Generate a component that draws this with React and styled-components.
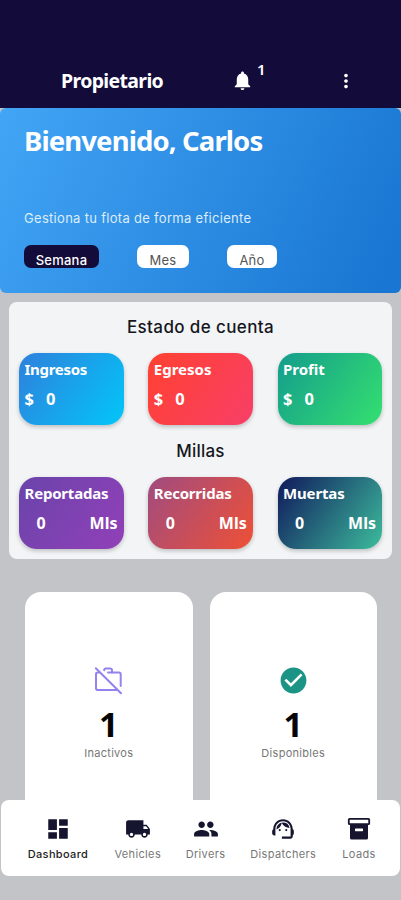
import React from 'react';
import styled, { createGlobalStyle } from 'styled-components';
import {
    MdNotifications,
    MdMoreVert,
    MdCheckCircle,
    MdDashboard,
    MdLocalShipping,
    MdPeople,
    MdSupportAgent,
} from 'react-icons/md';

const money = [
    { title: 'Ingresos', from: '#2f80dc', to: '#02c6f8', track: -0.3 },
    { title: 'Egresos', from: '#ff4130', to: '#f83f68', track: 0 },
    { title: 'Profit', from: '#149c8c', to: '#34e070', track: 0 },
];

const miles = [
    { title: 'Reportadas', from: '#6a44aa', to: '#9240b8', track: -0.2 },
    { title: 'Recorridas', from: '#a04c80', to: '#ee5036', track: -0.2 },
    { title: 'Muertas', from: '#10195c', to: '#3cbc9c', track: -0.15 },
];

const WorkOffIcon = () => (
    <svg viewBox="0 0 31 31" fill="none" stroke="currentColor" strokeWidth="2" strokeLinecap="round">
        <path d="M2.8 3.2 28 28.3" />
        <path d="M6 7.6H4.8A1.8 1.8 0 0 0 3 9.4v13.8A1.8 1.8 0 0 0 4.8 25H24" />
        <path d="M15 7.6h11a1.7 1.7 0 0 1 1.7 1.7V21" />
        <path d="M11.2 5.2V5a1.5 1.5 0 0 1 1.5-1.5h4.6A1.7 1.7 0 0 1 19 5.2v2.2" />
    </svg>
);

const LoadsIcon = () => (
    <svg width="26" height="26" viewBox="0 0 26 26">
        <path d="M4 8h18v14a1.5 1.5 0 0 1-1.5 1.5h-15A1.5 1.5 0 0 1 4 22z" fill="#15152f" />
        <rect x="2.8" y="2.8" width="20.4" height="5.4" rx="0.8" fill="#fff" stroke="#15152f" strokeWidth="1.8" />
        <rect x="9" y="12.6" width="8" height="2.6" rx="0.4" fill="#fff" />
    </svg>
);

function App() {
    return (
        <Screen>
            <GlobalStyle />
            <Header>
                <HeaderTitle>Propietario</HeaderTitle>
                <Bell>
                    <MdNotifications size={23} />
                    <BellCount>1</BellCount>
                </Bell>
                <MdMoreVert size={22} />
            </Header>

            <Main>
                <Hero>
                    <Welcome>Bienvenido, Carlos</Welcome>
                    <Subtitle>Gestiona tu flota de forma eficiente</Subtitle>
                    <Periods>
                        <Period $active $width={75}>Semana</Period>
                        <Period $width={52}>Mes</Period>
                        <Period $width={50}>Año</Period>
                    </Periods>
                </Hero>

                <Account>
                    <SectionTitle $track={0.38}>Estado de cuenta</SectionTitle>
                    <Tiles>
                        {money.map((item) => (
                            <Tile key={item.title} $from={item.from} $to={item.to}>
                                <TileTitle $track={item.track}>{item.title}</TileTitle>
                                <Amount>
                                    <span>$</span>
                                    <span>0</span>
                                </Amount>
                            </Tile>
                        ))}
                    </Tiles>
                    <SectionTitle $track={0.2}>Millas</SectionTitle>
                    <Tiles>
                        {miles.map((item) => (
                            <Tile key={item.title} $from={item.from} $to={item.to}>
                                <TileTitle $track={item.track}>{item.title}</TileTitle>
                                <Distance>
                                    <span>0</span>
                                    <span>Mls</span>
                                </Distance>
                            </Tile>
                        ))}
                    </Tiles>
                </Account>

                <Stats>
                    <StatCard $color="#9383ee">
                        <WorkOffIcon />
                        <StatValue>1</StatValue>
                        <StatLabel>Inactivos</StatLabel>
                    </StatCard>
                    <StatCard $color="#1b9485">
                        <MdCheckCircle />
                        <StatValue>1</StatValue>
                        <StatLabel>Disponibles</StatLabel>
                    </StatCard>
                </Stats>
            </Main>

            <BottomNav>
                <NavItem $active $width={66}>
                    <MdDashboard size={26} />
                    <span>Dashboard</span>
                </NavItem>
                <NavItem $width={50}>
                    <MdLocalShipping size={26} />
                    <span>Vehicles</span>
                </NavItem>
                <NavItem $width={42}>
                    <MdPeople size={26} />
                    <span>Drivers</span>
                </NavItem>
                <NavItem $width={70}>
                    <MdSupportAgent size={26} />
                    <span>Dispatchers</span>
                </NavItem>
                <NavItem $width={38}>
                    <LoadsIcon />
                    <span>Loads</span>
                </NavItem>
            </BottomNav>
        </Screen>
    );
}

export default App;

const GlobalStyle = createGlobalStyle`
    * {
        box-sizing: border-box;
    }
    body {
        margin: 0;
        background: #c3c4c8;
    }
    svg {
        display: block;
        flex-shrink: 0;
    }
`;

const Screen = styled.div`
    display: flex;
    flex-direction: column;
    width: 401px;
    height: 900px;
    overflow: hidden;
    background: #c3c4c8;
    font-family: Inter, 'Liberation Sans', sans-serif;
`;

const Header = styled.header`
    display: flex;
    align-items: center;
    flex-shrink: 0;
    height: 108px;
    padding: 53px 44px 0 61px;
    background: #130c3b;
    color: #fff;
`;

const HeaderTitle = styled.h1`
    width: 170px;
    margin: 0;
    padding-top: 1px;
    font: 700 19.5px/28px 'Noto Sans', sans-serif;
    letter-spacing: -0.65px;
`;

const Bell = styled.div`
    display: flex;
    flex: 1;
`;

const BellCount = styled.span`
    margin: -8px 0 0 3px;
    font: 600 15px/16px 'Noto Sans', sans-serif;
`;

const Main = styled.main`
    flex: 1;
    min-height: 0;
    overflow: hidden;
`;

const Hero = styled.section`
    height: 184.5px;
    padding: 14px 24px 0;
    border-radius: 6px;
    background: linear-gradient(115deg, #42a5f5 0%, #1976d2 95%);
    color: #fff;
`;

const Welcome = styled.h2`
    margin: 0;
    font: 700 27.5px/38px 'Noto Sans', sans-serif;
    letter-spacing: -0.88px;
    white-space: nowrap;
`;

const Subtitle = styled.p`
    margin: 48px 0 17px;
    font-size: 13px;
    line-height: 20px;
    letter-spacing: 0.3px;
    color: #dcecfc;
`;

const Periods = styled.div`
    display: flex;
    gap: 38px;
`;

const Period = styled.button`
    width: ${(props) => props.$width}px;
    height: 23px;
    padding: 6px 0 0;
    border: 0;
    border-radius: 7px;
    overflow: hidden;
    background: ${(props) => (props.$active ? '#130c3b' : '#fff')};
    color: ${(props) => (props.$active ? '#fff' : '#555')};
    font: ${(props) => (props.$active ? 500 : 400)} 13px/18px Inter, sans-serif;
    letter-spacing: 0.25px;
`;

const Account = styled.section`
    height: 257px;
    margin: 9px 9px 0;
    padding: 11px 10px 0;
    border-radius: 8px;
    background: #f2f4f6;
`;

const SectionTitle = styled.h3`
    margin: 0;
    color: #15171c;
    font-weight: 500;
    font-size: 17px;
    line-height: 28px;
    letter-spacing: ${(props) => props.$track}px;
    text-align: center;
`;

const Tiles = styled.div`
    display: flex;
    justify-content: space-between;
    margin: 12px 0;
`;

const Tile = styled.div`
    width: 104.5px;
    height: 72px;
    padding: 4px 6px 0 5.5px;
    border-radius: 18px;
    background: linear-gradient(125deg, ${(props) => props.$from}, ${(props) => props.$to});
    box-shadow: 0 2px 4px rgba(0, 0, 0, 0.22);
    color: #fff;
    font: 700 15px/24px 'Noto Sans', sans-serif;
`;

const TileTitle = styled.div`
    letter-spacing: ${(props) => props.$track}px;
`;

const Amount = styled.div`
    display: flex;
    gap: 12px;
    padding-top: 6px;
    font-size: 16.5px;
`;

const Distance = styled.div`
    display: flex;
    justify-content: space-between;
    padding: 6px 0 0 12px;
    font-size: 16px;
`;

const Stats = styled.section`
    display: flex;
    gap: 17px;
    padding: 33px 24px 0 25px;
`;

const StatCard = styled.div`
    display: flex;
    flex: 1;
    flex-direction: column;
    align-items: center;
    height: 260px;
    padding-top: 73px;
    border-radius: 16px;
    background: #fff;

    svg {
        width: 31px;
        height: 31px;
        color: ${(props) => props.$color};
    }
`;

const StatValue = styled.div`
    margin-top: 7px;
    color: #050505;
    font: 700 34px/43px 'Noto Sans', sans-serif;
`;

const StatLabel = styled.div`
    color: #777;
    font-size: 11px;
    line-height: 14px;
    letter-spacing: 0.3px;
`;

const BottomNav = styled.nav`
    display: flex;
    justify-content: space-between;
    flex-shrink: 0;
    height: 76px;
    margin: 0 1px 24px;
    padding: 16px 22px 0 24px;
    border-radius: 8px;
    background: #fff;
`;

const NavItem = styled.a`
    display: flex;
    flex-direction: column;
    align-items: center;
    width: ${(props) => props.$width}px;
    color: #15152f;

    span {
        margin-top: 5px;
        color: ${(props) => (props.$active ? '#222' : '#777')};
        font-weight: ${(props) => (props.$active ? 500 : 400)};
        font-size: 11px;
        line-height: 14px;
        letter-spacing: 0.35px;
        white-space: nowrap;
    }
`;
